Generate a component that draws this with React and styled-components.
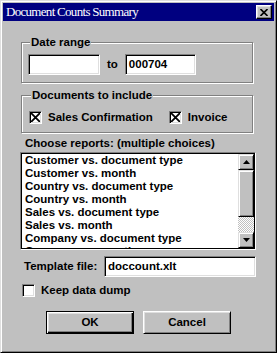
import React from "react";
import styled, { createGlobalStyle } from "styled-components";

const GlobalStyle = createGlobalStyle`
  html, body {
    margin: 0;
    padding: 0;
    background: #c0c0c0;
  }
`;

const Window = styled.div`
  box-sizing: border-box;
  width: 277px;
  height: 353px;
  padding: 2px;
  background: #c0c0c0;
  border: 1px solid;
  border-color: #dfdfdf #000 #000 #dfdfdf;
  box-shadow: inset 1px 1px #fff, inset -1px -1px #808080;
  display: flex;
  flex-direction: column;
  color: #000;
  font: bold 11.5px/13px "Liberation Sans", Arial, sans-serif;
`;

const TitleBar = styled.div`
  height: 18px;
  background: #000080;
  display: flex;
  align-items: center;
  justify-content: space-between;
  padding: 0 2px 0 3px;
`;

const Title = styled.span`
  color: #fff;
  font: normal 13px/18px "Liberation Serif", "Times New Roman", serif;
  letter-spacing: -0.7px;
`;

const CloseButton = styled.button`
  box-sizing: border-box;
  width: 16px;
  height: 14px;
  padding: 0;
  margin: 0;
  background: #c0c0c0;
  border: 1px solid;
  border-color: #fff #000 #000 #fff;
  box-shadow: inset -1px -1px #808080, inset 1px 1px #dfdfdf;
  display: flex;
  align-items: center;
  justify-content: center;
`;

const Body = styled.div`
  display: flex;
  flex-direction: column;
  padding: 0 18px 0 17px;
`;

const Group = styled.fieldset`
  margin: ${({ $top }) => $top}px 3px 0 1px;
  padding: ${({ $pad }) => $pad};
  border: 1px solid #808080;
  box-shadow: inset 1px 1px #fff, 1px 1px #fff;
  min-width: 0;
`;

const Legend = styled.legend`
  margin-left: 2px;
  padding: 0 1px;
  background: #c0c0c0;
  line-height: 13px;
`;

const Row = styled.div`
  display: flex;
  align-items: center;
  gap: ${({ $gap }) => $gap || 0}px;
`;

const Field = styled.div`
  box-sizing: border-box;
  width: ${({ $w }) => $w}px;
  height: 21px;
  padding: 0 3px;
  background: #fff;
  border: 1px solid;
  border-color: #808080 #fff #fff #808080;
  box-shadow: inset 1px 1px #000, inset -1px -1px #dfdfdf;
  display: flex;
  align-items: center;
`;

const To = styled.span`
  margin: 0 7px 0 7px;
`;

const CheckLabel = styled.label`
  display: flex;
  align-items: center;
  gap: 6px;
`;

const Box = styled.span`
  box-sizing: border-box;
  width: 13px;
  height: 13px;
  background: #fff;
  border: 1px solid;
  border-color: #808080 #fff #fff #808080;
  box-shadow: inset 1px 1px #000, inset -1px -1px #dfdfdf;
  display: flex;
  align-items: center;
  justify-content: center;
`;

const Caption = styled.div`
  margin: 4px 0 2px;
  padding-left: 5px;
`;

const ListBox = styled.div`
  height: 98px;
  box-sizing: border-box;
  border: 1px solid;
  border-color: #808080 #fff #fff #808080;
  display: flex;
`;

const ListInner = styled.div`
  flex: 1;
  display: flex;
  border: 1px solid #000;
  background: #fff;
  overflow: hidden;
`;

const Items = styled.ul`
  flex: 1;
  margin: 0;
  padding: 0;
  list-style: none;
  overflow: hidden;
`;

const Item = styled.li`
  height: 13px;
  padding-left: 3px;
  white-space: nowrap;
`;

const ScrollBar = styled.div`
  width: 16px;
  display: flex;
  flex-direction: column;
  background-color: #c0c0c0;
  background-image: conic-gradient(#fff 25%, #c0c0c0 0 50%, #fff 0 75%, #c0c0c0 0);
  background-size: 2px 2px;
`;

const Raised = styled.div`
  box-sizing: border-box;
  height: ${({ $h }) => $h}px;
  flex-shrink: 0;
  background: #c0c0c0;
  border: 1px solid;
  border-color: #dfdfdf #000 #000 #dfdfdf;
  box-shadow: inset 1px 1px #fff, inset -1px -1px #808080;
  display: flex;
  align-items: center;
  justify-content: center;
`;

const Track = styled.div`
  flex: 1;
`;

const TemplateRow = styled.div`
  margin-top: 6px;
  display: flex;
  align-items: center;
  justify-content: space-between;
  padding-left: 4px;
`;

const KeepRow = styled.div`
  margin: 7px 0 0 2px;
`;

const Buttons = styled.div`
  margin-top: 14px;
  display: flex;
  justify-content: center;
  gap: 9px;
  padding-left: 1px;
`;

const Button = styled.button`
  box-sizing: border-box;
  width: 88px;
  height: 23px;
  margin: 0;
  padding: 0;
  background: #c0c0c0;
  color: #000;
  font: inherit;
  border: 1px solid;
  border-color: ${({ $default }) =>
    $default ? "#000" : "#fff #000 #000 #fff"};
  box-shadow: ${({ $default }) =>
    $default
      ? "inset 1px 1px #fff, inset -1px -1px #000, inset -2px -2px #808080, inset 2px 2px #dfdfdf"
      : "inset 1px 1px #dfdfdf, inset -1px -1px #808080"};
`;

const Cross = ({ size }) => (
  <svg width={size} height={size} viewBox="0 0 9 9">
    <path d="M0 0L9 9M9 0L0 9" stroke="#000" strokeWidth="1.8" />
  </svg>
);

const Arrow = ({ down }) => (
  <svg width="7" height="4" viewBox="0 0 7 4">
    <path d={down ? "M0 0h7L3.5 4z" : "M3.5 0L7 4H0z"} fill="#000" />
  </svg>
);

// only the rows that fit in the box (the last one is half shown)
const reports = [
  "Customer vs. document type",
  "Customer vs. month",
  "Country vs. document type",
  "Country vs. month",
  "Sales vs. document type",
  "Sales vs. month",
  "Company vs. document type",
  "Company vs. month",
];

const Check = ({ checked, children }) => (
  <CheckLabel>
    <Box>{checked && <Cross size={9} />}</Box>
    {children}
  </CheckLabel>
);

export default function App() {
  return (
    <>
      <GlobalStyle />
      <Window>
        <TitleBar>
          <Title>Document Counts Summary</Title>
          <CloseButton>
            <svg width="8" height="7" viewBox="0 0 8 7">
              <path d="M0.5 0L7.5 7M7.5 0L0.5 7" stroke="#000" strokeWidth="1.6" />
            </svg>
          </CloseButton>
        </TitleBar>
        <Body>
          <Group $top={15} $pad="5px 0 7px 6px">
            <Legend>Date range</Legend>
            <Row>
              <Field $w={72} />
              <To>to</To>
              <Field $w={71}>000704</Field>
            </Row>
          </Group>
          <Group $top={6} $pad="9px 0 8px 7px">
            <Legend>Documents to include</Legend>
            <Row $gap={16}>
              <Check checked>Sales Confirmation</Check>
              <Check checked>Invoice</Check>
            </Row>
          </Group>
          <Caption>Choose reports: (multiple choices)</Caption>
          <ListBox>
            <ListInner>
              <Items>
                {reports.map((r) => (
                  <Item key={r}>{r}</Item>
                ))}
              </Items>
              <ScrollBar>
                <Raised $h={16}>
                  <Arrow />
                </Raised>
                <Raised $h={47} />
                <Track />
                <Raised $h={16}>
                  <Arrow down />
                </Raised>
              </ScrollBar>
            </ListInner>
          </ListBox>
          <TemplateRow>
            <span>Template file:</span>
            <Field $w={152}>doccount.xlt</Field>
          </TemplateRow>
          <KeepRow>
            <Check>Keep data dump</Check>
          </KeepRow>
          <Buttons>
            <Button $default>OK</Button>
            <Button>Cancel</Button>
          </Buttons>
        </Body>
      </Window>
    </>
  );
}
